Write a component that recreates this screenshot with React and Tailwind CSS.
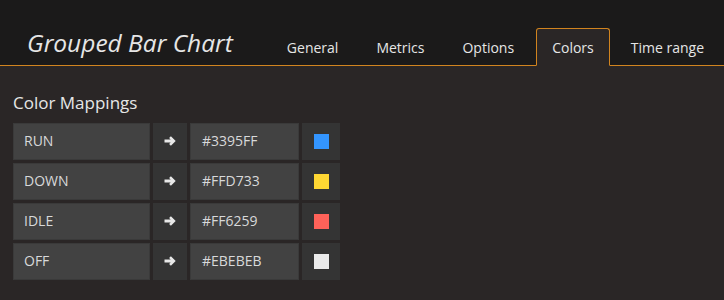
import React from "react";

const rows = [
  { name: "RUN", hex: "#3395FF", color: "#3395ff" },
  { name: "DOWN", hex: "#FFD733", color: "#ffd733" },
  { name: "IDLE", hex: "#FF6259", color: "#ff6259" },
  { name: "OFF", hex: "#EBEBEB", color: "#ebebeb" },
];

const tabs = ["General", "Metrics", "Options", "Colors", "Time range"];

function Arrow() {
  return (
    <svg width="12" height="10" viewBox="0 0 12 10">
      <path d="M0.5 3.5h6.2L5.1 1.9 6.9 0.2 11.7 5 6.9 9.8 5.1 8.1 6.7 6.5H0.5z" fill="#e8e8e8" />
    </svg>
  );
}

export default function App() {
  return (
    <div className="w-[724px] h-[300px] bg-[#2a2626] text-[#d8d9da] overflow-hidden" style={{ fontFamily: '"Open Sans", sans-serif' }}>
      <div className="h-[66px] bg-[#1b1a1a] border-b border-[#d1841f] flex items-end">
        <div className="pl-[27px] pb-[10px] text-[24.5px] italic text-[#e6e6e6] leading-none">Grouped Bar Chart</div>
        <div className="ml-auto pr-[5px] flex items-end gap-[6px] mb-[-1px]">
          {tabs.map((t) => (
            <div
              key={t}
              className={
                "h-[38px] flex items-center text-[14px] leading-none border rounded-t-[3px] " +
                (t === "Colors"
                  ? "px-[15px] border-[#d1841f] border-b-[#2a2626] bg-[#2a2626] text-[#e6e6e6]"
                  : t === "Time range"
                  ? "px-[14px] border-transparent text-[#e6e6e6]"
                  : "px-[15px] border-transparent text-[#e6e6e6]")
              }
            >
              <span className="pt-[2px]">{t}</span>
            </div>
          ))}
        </div>
      </div>
      <div className="pl-[13px] pt-[28px]">
        <div className="text-[17px] leading-none text-[#e6e6e6] mb-[12px]">Color Mappings</div>
        <div className="flex flex-col gap-[3px]">
          {rows.map((r) => (
            <div key={r.name} className="flex gap-[3px] h-[37px]">
              <div className="w-[137px] bg-[#424242] border border-[#3a3a3a] flex items-center pl-[10px] pb-[2px] text-[14px]">{r.name}</div>
              <div className="w-[34px] bg-[#343434] flex items-center justify-center pb-[2px]"><Arrow /></div>
              <div className="w-[109px] bg-[#424242] border border-[#3a3a3a] flex items-center pl-[11px] pb-[2px] text-[14px]">{r.hex}</div>
              <div className="w-[38px] bg-[#343434] flex items-center justify-center">
                <div className="w-[15px] h-[15px]" style={{ backgroundColor: r.color }} />
              </div>
            </div>
          ))}
        </div>
      </div>
    </div>
  );
}
